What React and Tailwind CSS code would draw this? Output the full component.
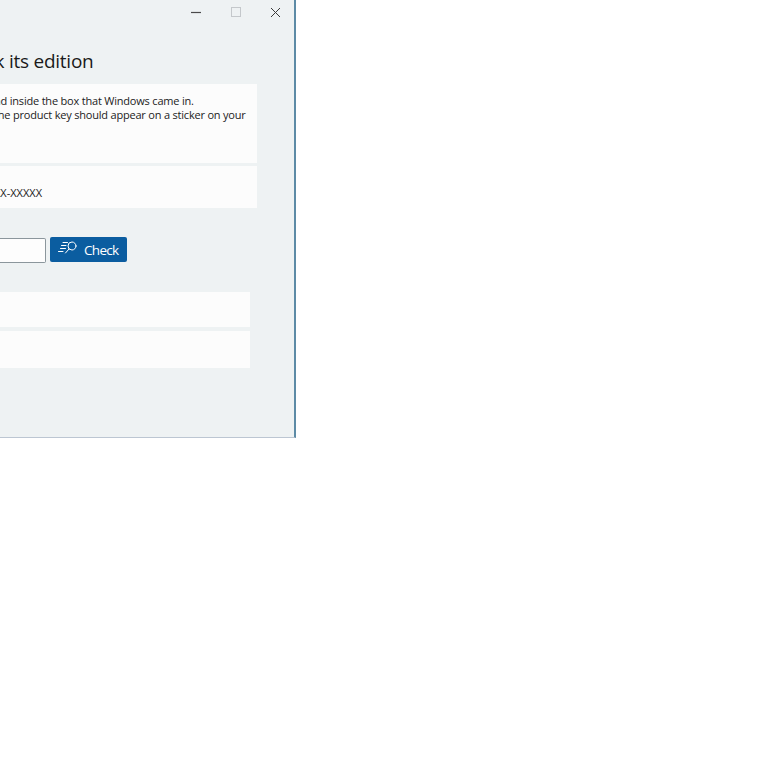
const font = "[font-family:'Open_Sans','Noto_Sans',sans-serif]";

function SearchFastIcon() {
  return (
    <svg className="-mt-[3px]" width="20" height="14" viewBox="0 0 20 14" fill="none" stroke="white" strokeWidth="1" strokeLinecap="round">
      <circle cx="14" cy="5" r="4" />
      <path d="M11 8 L7.5 12" />
      <path d="M5 1.5 H9.5" />
      <path d="M3.5 4.5 H8" />
      <path d="M2.5 7.5 H7.5" />
      <path d="M0.5 10.5 H5" />
    </svg>
  );
}

function WindowControls() {
  return (
    <div className="flex justify-end items-center h-6 pr-[13px] gap-[29px]">
      <svg className="mr-[1px]" width="10" height="10" viewBox="0 0 10 10" stroke="#4a4a4a" strokeWidth="1.2">
        <path d="M0 5.5 H10" />
      </svg>
      <svg width="10" height="10" viewBox="0 0 10 10" fill="none" stroke="#c4c8cb" strokeWidth="1">
        <rect x="0.5" y="0.5" width="9" height="9" />
      </svg>
      <svg width="11" height="11" viewBox="0 0 11 11" stroke="#3a3a3a" strokeWidth="1">
        <path d="M1 1 L10 10 M10 1 L1 10" />
      </svg>
    </div>
  );
}

export default function App() {
  return (
    <div className={`w-[768px] h-[768px] bg-white overflow-hidden ${font}`}>
      <div className="w-[296px] h-[438px] bg-[#eef2f3] border-r-2 border-b border-r-[#5d8ba6] border-b-[#bcc6d2] overflow-hidden">
        <WindowControls />

        <h1 className="mt-[22px] -ml-[45px] text-[19px] leading-[30px] tracking-[-0.25px] text-[#1a1a1a] whitespace-nowrap">
          check its edition
        </h1>

        <div className="mt-[8px] w-[257px] flex flex-col gap-[3px]">
          <div className="h-[79px] bg-[#fcfcfc] pt-[10px] text-[11px] leading-[14px] tracking-[-0.2px] text-[#222] whitespace-nowrap">
            <p className="-ml-[6px]">nd inside the box that Windows came in.</p>
            <p className="-ml-[6px]">the product key should appear on a sticker on your</p>
          </div>
          <div className="h-[42px] bg-[#fcfcfc] pt-[20px] text-[11px] leading-[14px] text-[#222] whitespace-nowrap">
            <p className="-ml-[6px]">XX-XXXXX</p>
          </div>
        </div>

        <div className="mt-[29px] flex items-start gap-[4px]">
          <div className="mt-[1px] w-[46px] h-[25px] bg-[#fdfdfd] border border-l-0 border-[#8b969c] rounded-r-[2px]" />
          <button className="w-[77px] h-[25px] bg-[#0b5da0] rounded-[2px] flex items-center pl-[8px] gap-[6px] text-white text-[13.5px] tracking-[-0.7px]">
            <SearchFastIcon />
            <span className="mt-[1px]">Check</span>
          </button>
        </div>

        <div className="mt-[29px] w-[250px] flex flex-col gap-[4px]">
          <div className="h-[35px] bg-[#fcfcfc]" />
          <div className="h-[37px] bg-[#fcfcfc]" />
        </div>
      </div>
    </div>
  );
}
